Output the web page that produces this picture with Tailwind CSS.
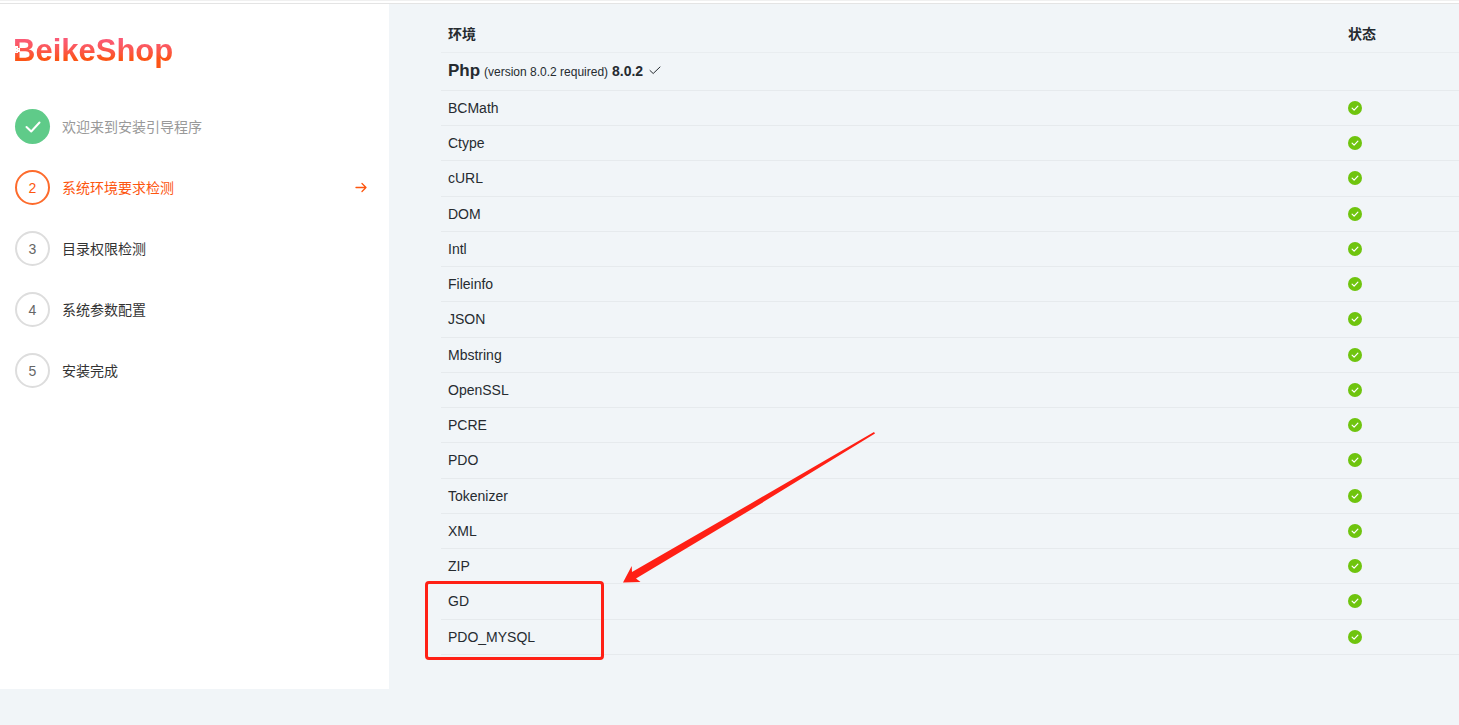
<!doctype html>
<html lang="zh-CN">

<head>
    <meta charset="utf-8">
    <meta name="viewport" content="width=device-width, initial-scale=1">
    <title>BeikeShop 安装引导</title>
    <script src="https://cdn.jsdelivr.net/npm/@tailwindcss/browser@4"></script>
</head>

<body class="min-h-screen bg-[#f1f5f8] font-['Liberation_Sans','Noto_Sans_CJK_SC',sans-serif] text-sm text-[#262b30]">
    <svg class="hidden">
        <symbol id="icon-ok" viewBox="0 0 16 16">
            <circle cx="8" cy="8" r="8" fill="#6fc40e" />
            <path d="M4.7 8.2l2.3 2.3 4.3-4.6" fill="none" stroke="#fff" stroke-width="1.4" stroke-linecap="round" stroke-linejoin="round" />
        </symbol>
    </svg>

    <header class="h-1 border-t border-b border-t-[#f0f0f0] border-b-[#e4e4e4] bg-white"></header>

    <div class="flex items-start">
        <aside class="min-h-[685px] w-[389px] shrink-0 bg-white px-[15px] pt-[29px]">
            <h1 class="relative -ml-0.5 w-fit bg-linear-to-b from-[#fb5a75] from-20% to-[#fc5416] to-70% bg-clip-text text-[31px] leading-9 font-bold text-transparent">
                BeikeShop
                <svg class="absolute top-[13px] left-0.5 h-2 w-[5px]" viewBox="0 0 5 8">
                    <path d="M0 0h3v2h2v4H3v1H0z" fill="#fff" />
                    <path d="M1 2h1v1H1zM3 3h1v1H3zM1 5h1v1H1z" fill="#fdb5ae" />
                </svg>
            </h1>

            <ol class="mt-10 flex flex-col gap-[26px]">
                <li class="flex items-center gap-3 text-[#999]">
                    <span class="flex size-[35px] items-center justify-center rounded-full bg-[#5fcb89] text-white">
                        <svg class="size-5" viewBox="0 0 20 20" fill="none" stroke="currentColor" stroke-width="2" stroke-linecap="round" stroke-linejoin="round">
                            <path d="M3.5 10l4.7 4.5 8.3-9" />
                        </svg>
                    </span>
                    欢迎来到安装引导程序
                </li>
                <li class="flex items-center gap-3 text-[#fd560f]">
                    <span class="flex size-[35px] items-center justify-center rounded-full border-2 border-[#fd6b2c]">2</span>
                    系统环境要求检测
                    <svg class="mr-[7px] ml-auto size-3" viewBox="0 0 12 12" fill="none" stroke="currentColor" stroke-width="1.3" stroke-linecap="round" stroke-linejoin="round">
                        <path d="M1 5.5h10M7 1.5l4 4-4 4" />
                    </svg>
                </li>
                <li class="flex items-center gap-3 text-[#333]">
                    <span class="flex size-[35px] items-center justify-center rounded-full border-2 border-[#ddd] text-[#666]">3</span>
                    目录权限检测
                </li>
                <li class="flex items-center gap-3 text-[#333]">
                    <span class="flex size-[35px] items-center justify-center rounded-full border-2 border-[#ddd] text-[#666]">4</span>
                    系统参数配置
                </li>
                <li class="flex items-center gap-3 text-[#333]">
                    <span class="flex size-[35px] items-center justify-center rounded-full border-2 border-[#ddd] text-[#666]">5</span>
                    安装完成
                </li>
            </ol>
        </aside>

        <main class="relative flex-1 pt-3 pl-[52px]">
            <table class="h-[639px] w-full border-collapse text-left">
                <thead>
                    <tr class="h-9 border-b border-[#e9edf0]">
                        <th class="px-[7px] font-bold">环境</th>
                        <th class="w-[118px] px-[7px] font-bold">状态</th>
                    </tr>
                </thead>
                <tbody class="[&>tr]:h-[35px] [&>tr]:border-b [&>tr]:border-[#e6eaed] [&_td]:px-[7px]">
                    <tr>
                        <td class="h-[38px]" colspan="2">
                            <b class="text-[17px]">Php</b>
                            <span class="text-xs">(version 8.0.2 required)</span>
                            <b>8.0.2</b>
                            <svg class="ml-0.5 inline size-3 align-baseline" viewBox="0 0 12 12" fill="none" stroke="currentColor" stroke-width="1" stroke-linecap="round" stroke-linejoin="round">
                                <path d="M1 6.5l3.2 3L11 3" />
                            </svg>
                        </td>
                    </tr>
                    <tr><td>BCMath</td><td><svg class="size-3.5"><use href="#icon-ok" /></svg></td></tr>
                    <tr><td>Ctype</td><td><svg class="size-3.5"><use href="#icon-ok" /></svg></td></tr>
                    <tr><td>cURL</td><td><svg class="size-3.5"><use href="#icon-ok" /></svg></td></tr>
                    <tr><td>DOM</td><td><svg class="size-3.5"><use href="#icon-ok" /></svg></td></tr>
                    <tr><td>Intl</td><td><svg class="size-3.5"><use href="#icon-ok" /></svg></td></tr>
                    <tr><td>Fileinfo</td><td><svg class="size-3.5"><use href="#icon-ok" /></svg></td></tr>
                    <tr><td>JSON</td><td><svg class="size-3.5"><use href="#icon-ok" /></svg></td></tr>
                    <tr><td>Mbstring</td><td><svg class="size-3.5"><use href="#icon-ok" /></svg></td></tr>
                    <tr><td>OpenSSL</td><td><svg class="size-3.5"><use href="#icon-ok" /></svg></td></tr>
                    <tr><td>PCRE</td><td><svg class="size-3.5"><use href="#icon-ok" /></svg></td></tr>
                    <tr><td>PDO</td><td><svg class="size-3.5"><use href="#icon-ok" /></svg></td></tr>
                    <tr><td>Tokenizer</td><td><svg class="size-3.5"><use href="#icon-ok" /></svg></td></tr>
                    <tr><td>XML</td><td><svg class="size-3.5"><use href="#icon-ok" /></svg></td></tr>
                    <tr><td>ZIP</td><td><svg class="size-3.5"><use href="#icon-ok" /></svg></td></tr>
                    <tr><td>GD</td><td><svg class="size-3.5"><use href="#icon-ok" /></svg></td></tr>
                    <tr><td>PDO_MYSQL</td><td><svg class="size-3.5"><use href="#icon-ok" /></svg></td></tr>
                </tbody>
            </table>

            <div class="absolute top-[577px] left-9 h-[79px] w-[179px] rounded-sm border-3 border-[#ff2015]"></div>
            <svg class="absolute top-[427px] left-[233px] h-[154px] w-[254px]" viewBox="0 0 254 154">
                <path d="M252 1l1 1.5L130 78 14 147.5l4.5 3.5L1 151.5 9.7 135l.3 6L128 73z" fill="#ff2015" />
            </svg>
        </main>
    </div>
</body>

</html>
